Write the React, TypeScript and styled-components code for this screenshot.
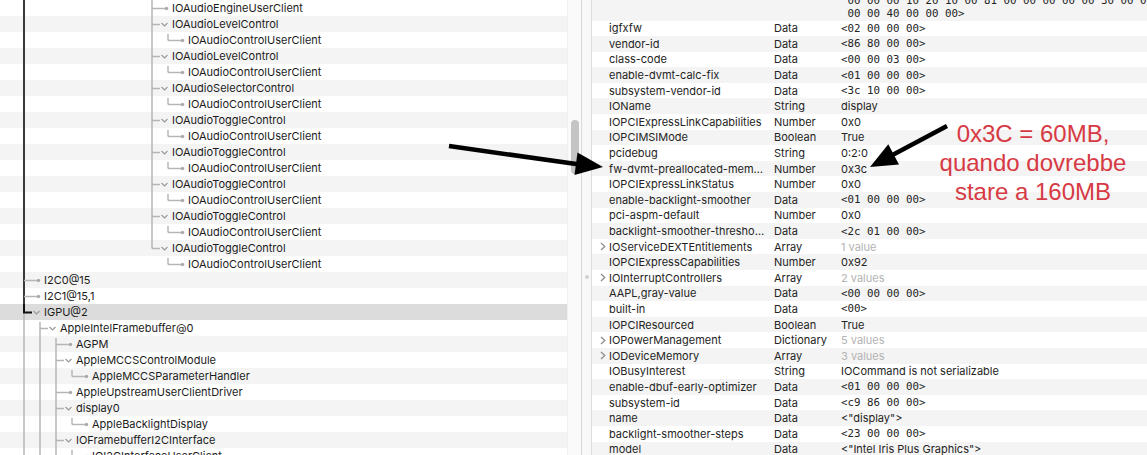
import React from 'react';
import styled, { createGlobalStyle } from 'styled-components';

const Global = createGlobalStyle`
  html, body { margin: 0; padding: 0; background: #fff; }
  body {
    width: 1147px;
    height: 455px;
    overflow: hidden;
    font-family: Inter, "Liberation Sans", Arial, sans-serif;
    -webkit-font-smoothing: antialiased;
  }
`;

const Window = styled.div`
  position: relative;
  display: flex;
  width: 1147px;
  height: 455px;
  overflow: hidden;
  background: #fff;
`;

/* ---------- left outline ---------- */
const TreePane = styled.div`
  width: 567px;
  flex: none;
  display: flex;
  flex-direction: column;
  overflow: hidden;
`;

type Shade = 'white' | 'stripe' | 'selected';

const TreeRow = styled.div<{ $shade: Shade }>`
  height: 16px;
  flex: none;
  display: flex;
  align-items: center;
  background: ${(p) =>
    p.$shade === 'selected' ? '#dcdcdc' : p.$shade === 'stripe' ? '#f4f4f4' : '#ffffff'};
  font-size: 11px;
  color: #1c1c1c;
  white-space: nowrap;
`;

const Guides = styled.svg`
  flex: none;
  display: block;
`;

const NodeLabel = styled.span`
  line-height: 16px;
`;

const ScrollTrack = styled.div`
  width: 15px;
  flex: none;
  display: flex;
  flex-direction: column;
  padding-top: 120px;
  box-sizing: border-box;
  background: #fafafa;
  border-left: 1px solid #efefef;
  border-right: 1px solid #d9d9d9;
`;

const ScrollThumb = styled.div`
  width: 8px;
  height: 54px;
  margin-left: 3px;
  border-radius: 4px;
  background: #c4c4c4;
`;

const Splitter = styled.div`
  width: 10px;
  flex: none;
  display: flex;
  flex-direction: column;
  align-items: center;
  padding-top: 275px;
  box-sizing: border-box;
  background: #f8f8f8;
  border-right: 1px solid #dcdcdc;
`;

const SplitterDot = styled.div`
  width: 4px;
  height: 4px;
  border-radius: 50%;
  background: #d3d3d3;
`;

/* ---------- right property table ---------- */
const PropPane = styled.div`
  flex: 1;
  min-width: 0;
  display: flex;
  flex-direction: column;
  overflow: hidden;
`;

const PropRow = styled.div<{ $stripe: boolean }>`
  height: 15.6px;
  flex: none;
  display: grid;
  grid-template-columns: 182px 67px 1fr;
  align-items: center;
  background: ${(p) => (p.$stripe ? '#f4f4f4' : '#ffffff')};
  font-size: 11px;
  color: #242424;
  white-space: nowrap;
`;

const HeadRow = styled.div`
  flex: none;
  display: grid;
  grid-template-columns: 182px 67px 1fr;
  margin-top: -17.5px;
  padding-bottom: 0.5px;
  background: #f4f4f4;
  white-space: nowrap;
`;

const KeyCell = styled.div`
  display: flex;
  align-items: center;
  padding-left: 8px;
  overflow: hidden;
`;

const Disclosure = styled.svg`
  flex: none;
  width: 9px;
  height: 9px;
  display: block;
`;

const TypeCell = styled.div`
  overflow: hidden;
`;

const ValueCell = styled.div<{ $mode: 'mono' | 'text' | 'dim' }>`
  overflow: hidden;
  font-family: ${(p) =>
    p.$mode === 'mono' ? '"DejaVu Sans Mono", "Liberation Mono", monospace' : 'inherit'};
  font-size: ${(p) => (p.$mode === 'mono' ? '10.8px' : '11px')};
  color: ${(p) => (p.$mode === 'dim' ? '#b3b3b3' : '#242424')};
`;

const MonoLines = styled.div`
  grid-column: 3;
  font-family: "DejaVu Sans Mono", "Liberation Mono", monospace;
  font-size: 10.8px;
  line-height: 12.5px;
  color: #242424;
`;

const MonoLine = styled.div<{ $cont: boolean }>`
  padding-left: ${(p) => (p.$cont ? '6.5px' : '0')};
`;

/* ---------- overlays ---------- */
const Overlay = styled.svg`
  position: absolute;
  left: 0;
  top: 0;
  pointer-events: none;
`;

const Note = styled.div`
  position: absolute;
  left: 913px;
  top: 118.5px;
  width: 240px;
  text-align: center;
  font-family: "Liberation Sans", Arial, sans-serif;
  font-size: 24px;
  line-height: 29px;
  color: #d73a44;
  white-space: nowrap;
`;

/* ---------- data ---------- */
type TreeNode = {
  label: string;
  cx: number;
  kind: 'leaf' | 'open';
  last?: boolean;
  first?: boolean;
  vert?: number[];
  dark?: number[];
  connDark?: boolean;
  selEnd?: boolean;
};

const audioPair = (ctl: string, last = false): TreeNode[] => [
  { label: ctl, cx: 152, kind: 'open', last, dark: [24] },
  {
    label: 'IOAudioControlUserClient',
    cx: 168,
    kind: 'leaf',
    last: true,
    first: true,
    vert: last ? [] : [152],
    dark: [24],
  },
];

const tree: TreeNode[] = [
  { label: 'IOAudioEngineUserClient', cx: 152, kind: 'leaf', dark: [24] },
  ...audioPair('IOAudioLevelControl'),
  ...audioPair('IOAudioLevelControl'),
  ...audioPair('IOAudioSelectorControl'),
  ...audioPair('IOAudioToggleControl'),
  ...audioPair('IOAudioToggleControl'),
  ...audioPair('IOAudioToggleControl'),
  ...audioPair('IOAudioToggleControl'),
  ...audioPair('IOAudioToggleControl', true),
  { label: 'I2C0@15', cx: 24, kind: 'leaf', connDark: true },
  { label: 'I2C1@15,1', cx: 24, kind: 'leaf', connDark: true },
  { label: 'IGPU@2', cx: 24, kind: 'open', selEnd: true },
  { label: 'AppleIntelFramebuffer@0', cx: 40, kind: 'open', first: true, vert: [24] },
  { label: 'AGPM', cx: 56, kind: 'leaf', first: true, vert: [24, 40] },
  { label: 'AppleMCCSControlModule', cx: 56, kind: 'open', vert: [24, 40] },
  { label: 'AppleMCCSParameterHandler', cx: 72, kind: 'leaf', first: true, last: true, vert: [24, 40, 56] },
  { label: 'AppleUpstreamUserClientDriver', cx: 56, kind: 'leaf', vert: [24, 40] },
  { label: 'display0', cx: 56, kind: 'open', vert: [24, 40] },
  { label: 'AppleBacklightDisplay', cx: 72, kind: 'leaf', first: true, last: true, vert: [24, 40, 56] },
  { label: 'IOFramebufferI2CInterface', cx: 56, kind: 'open', vert: [24, 40] },
  { label: 'IOI2CInterfaceUserClient', cx: 72, kind: 'leaf', first: true, vert: [24, 40, 56] },
];

const GREY = '#b6b6b6';
const DARK = '#3a3a3a';

function TreeGuides({ n }: { n: TreeNode }) {
  const w = n.cx + 20;
  const cx = n.cx;
  const y0 = n.first ? 2 : 0;
  const yEnd = n.last ? 8.5 : 16;
  const hEnd = n.kind === 'open' ? cx + 8 : cx + 13;
  return (
    <Guides width={w} height={16} viewBox={`0 0 ${w} 16`}>
      {(n.vert || []).map((x) => (
        <line key={`v${x}`} x1={x} x2={x} y1={0} y2={16} stroke={GREY} strokeWidth={1.5} />
      ))}
      {(n.dark || []).map((x) => (
        <line key={`d${x}`} x1={x} x2={x} y1={0} y2={16} stroke={DARK} strokeWidth={2} />
      ))}
      {n.selEnd ? (
        <>
          <line x1={cx} x2={cx} y1={8.5} y2={16} stroke={GREY} strokeWidth={1.5} />
          <line x1={cx} x2={cx} y1={0} y2={9} stroke="#111" strokeWidth={2} />
          <line x1={cx - 1} x2={hEnd} y1={8.5} y2={8.5} stroke="#111" strokeWidth={2} />
        </>
      ) : (
        <>
          <line
            x1={cx}
            x2={cx}
            y1={y0}
            y2={yEnd}
            stroke={n.connDark ? DARK : GREY}
            strokeWidth={n.connDark ? 2 : 1.5}
          />
          <line x1={cx} x2={hEnd} y1={8.5} y2={8.5} stroke={GREY} strokeWidth={1.5} />
        </>
      )}
      {n.kind === 'open' ? (
        <polyline
          points={`${cx + 9.5},7 ${cx + 12.5},10 ${cx + 15.5},7`}
          fill="none"
          stroke="#9a9a9a"
          strokeWidth={1.2}
        />
      ) : (
        <circle cx={cx + 14.5} cy={8.5} r={1.7} fill="#a9a9a9" />
      )}
    </Guides>
  );
}

type Prop = { key: string; type: string; value: string; mode: 'mono' | 'text' | 'dim'; expand?: boolean };

const props: Prop[] = [
  { key: 'igfxfw', type: 'Data', value: '<02 00 00 00>', mode: 'mono' },
  { key: 'vendor-id', type: 'Data', value: '<86 80 00 00>', mode: 'mono' },
  { key: 'class-code', type: 'Data', value: '<00 00 03 00>', mode: 'mono' },
  { key: 'enable-dvmt-calc-fix', type: 'Data', value: '<01 00 00 00>', mode: 'mono' },
  { key: 'subsystem-vendor-id', type: 'Data', value: '<3c 10 00 00>', mode: 'mono' },
  { key: 'IOName', type: 'String', value: 'display', mode: 'text' },
  { key: 'IOPCIExpressLinkCapabilities', type: 'Number', value: '0x0', mode: 'text' },
  { key: 'IOPCIMSIMode', type: 'Boolean', value: 'True', mode: 'text' },
  { key: 'pcidebug', type: 'String', value: '0:2:0', mode: 'text' },
  { key: 'fw-dvmt-preallocated-mem…', type: 'Number', value: '0x3c', mode: 'text' },
  { key: 'IOPCIExpressLinkStatus', type: 'Number', value: '0x0', mode: 'text' },
  { key: 'enable-backlight-smoother', type: 'Data', value: '<01 00 00 00>', mode: 'mono' },
  { key: 'pci-aspm-default', type: 'Number', value: '0x0', mode: 'text' },
  { key: 'backlight-smoother-thresho…', type: 'Data', value: '<2c 01 00 00>', mode: 'mono' },
  { key: 'IOServiceDEXTEntitlements', type: 'Array', value: '1 value', mode: 'dim', expand: true },
  { key: 'IOPCIExpressCapabilities', type: 'Number', value: '0x92', mode: 'text' },
  { key: 'IOInterruptControllers', type: 'Array', value: '2 values', mode: 'dim', expand: true },
  { key: 'AAPL,gray-value', type: 'Data', value: '<00 00 00 00>', mode: 'mono' },
  { key: 'built-in', type: 'Data', value: '<00>', mode: 'mono' },
  { key: 'IOPCIResourced', type: 'Boolean', value: 'True', mode: 'text' },
  { key: 'IOPowerManagement', type: 'Dictionary', value: '5 values', mode: 'dim', expand: true },
  { key: 'IODeviceMemory', type: 'Array', value: '3 values', mode: 'dim', expand: true },
  { key: 'IOBusyInterest', type: 'String', value: 'IOCommand is not serializable', mode: 'text' },
  { key: 'enable-dbuf-early-optimizer', type: 'Data', value: '<01 00 00 00>', mode: 'mono' },
  { key: 'subsystem-id', type: 'Data', value: '<c9 86 00 00>', mode: 'mono' },
  { key: 'name', type: 'Data', value: '<"display">', mode: 'text' },
  { key: 'backlight-smoother-steps', type: 'Data', value: '<23 00 00 00>', mode: 'mono' },
  { key: 'model', type: 'Data', value: '<"Intel Iris Plus Graphics">', mode: 'text' },
];

const headLines = [
  '<00 00 00 00 00 00 00 00 00 00 00 00 00 00 00 00 00 00 00 00 00',
  '00 00 00 10 20 10 00 81 00 00 00 00 00 30 00 00 00 00 00 00',
  '00 00 40 00 00 00>',
];

export default function App() {
  return (
    <>
      <Global />
      <Window>
        <TreePane>
          {tree.map((n, i) => (
            <TreeRow key={i} $shade={i === 19 ? 'selected' : i % 2 === 1 ? 'stripe' : 'white'}>
              <TreeGuides n={n} />
              <NodeLabel>{n.label}</NodeLabel>
            </TreeRow>
          ))}
        </TreePane>
        <ScrollTrack>
          <ScrollThumb />
        </ScrollTrack>
        <Splitter>
          <SplitterDot />
        </Splitter>
        <PropPane>
          <HeadRow>
            <MonoLines>
              {headLines.map((l, i) => (
                <MonoLine key={i} $cont={i > 0}>
                  {l}
                </MonoLine>
              ))}
            </MonoLines>
          </HeadRow>
          {props.map((p, i) => (
            <PropRow key={p.key} $stripe={i % 2 === 1}>
              <KeyCell>
                <Disclosure viewBox="0 0 9 9">
                  {p.expand && (
                    <polyline points="1,1 4.8,4.5 1,8" fill="none" stroke="#8a8a8a" strokeWidth={1.2} />
                  )}
                </Disclosure>
                <span>{p.key}</span>
              </KeyCell>
              <TypeCell>{p.type}</TypeCell>
              <ValueCell $mode={p.mode}>{p.value}</ValueCell>
            </PropRow>
          ))}
        </PropPane>

        <Overlay width={1147} height={455} viewBox="0 0 1147 455">
          <line x1={449} y1={146} x2={578} y2={164.3} stroke="#000" strokeWidth={4.5} />
          <polygon points="577.5,152.5 574.5,175 603,167" fill="#000" />
          <line x1={947} y1={126} x2={892} y2={155.3} stroke="#000" strokeWidth={4.5} />
          <polygon points="899,164.5 888.3,144.3 870,167" fill="#000" />
        </Overlay>
        <Note>
          0x3C = 60MB,
          <br />
          quando dovrebbe
          <br />
          stare a 160MB
        </Note>
      </Window>
    </>
  );
}
